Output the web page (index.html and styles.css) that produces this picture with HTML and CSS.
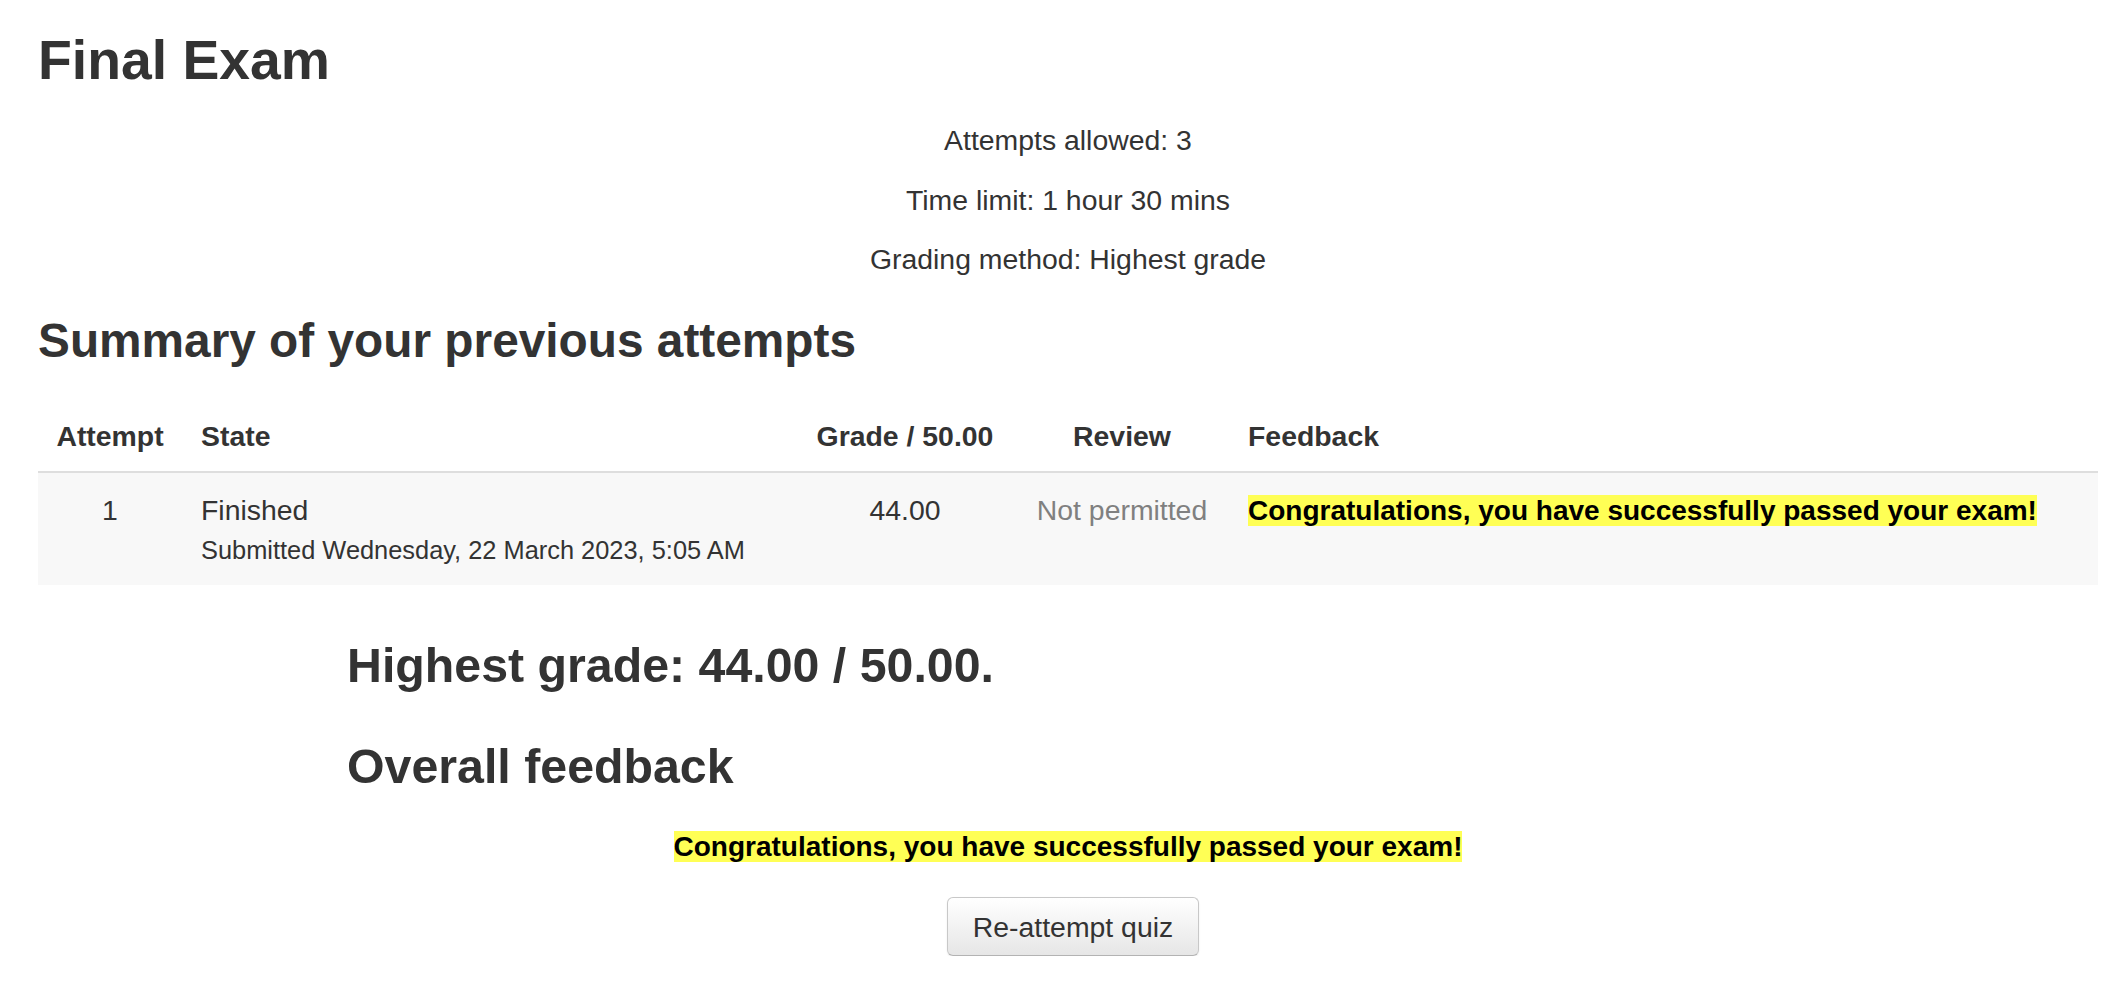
FILE: index.html
```html
<!DOCTYPE html>
<html lang="en">
<head>
<meta charset="utf-8">
<title>Final Exam</title>
<link rel="stylesheet" href="styles.css">
</head>
<body>
<div class="page">
  <h2 class="title">Final Exam</h2>
  <div class="quizinfo">
    <p>Attempts allowed: 3</p>
    <p>Time limit: 1 hour 30 mins</p>
    <p>Grading method: Highest grade</p>
  </div>
  <h3 class="summary">Summary of your previous attempts</h3>
  <table class="attempts">
    <thead>
      <tr>
        <th class="c-attempt">Attempt</th>
        <th class="c-state">State</th>
        <th class="c-grade">Grade / 50.00</th>
        <th class="c-review">Review</th>
        <th class="c-feedback">Feedback</th>
      </tr>
    </thead>
    <tbody>
      <tr>
        <td class="c-attempt">1</td>
        <td class="c-state">Finished<span class="statedetails">Submitted Wednesday, 22 March 2023, 5:05 AM</span></td>
        <td class="c-grade">44.00</td>
        <td class="c-review"><span class="muted">Not permitted</span></td>
        <td class="c-feedback"><span class="hl">Congratulations, you have successfully passed your exam!</span></td>
      </tr>
    </tbody>
  </table>
  <div class="result">
    <h3 class="grade">Highest grade: 44.00 / 50.00.</h3>
    <h3 class="overall-title">Overall feedback</h3>
  </div>
  <div class="overall"><span class="hl">Congratulations, you have successfully passed your exam!</span></div>
  <div class="buttons"><button class="btn" type="button">Re-attempt quiz</button></div>
</div>
</body>
</html>
```

FILE: styles.css
```css
html, body {
  margin: 0;
  padding: 0;
  background: #fff;
}
body {
  font-family: "Liberation Sans", Arial, Helvetica, sans-serif;
  font-size: 28.4px;
  line-height: 1.5;
  color: #333;
}
.page {
  width: 2060px;
  margin-left: 38px;
}
h2, h3 {
  font-weight: bold;
  line-height: 1.2;
  margin: 0;
  color: #333;
}
.title {
  font-size: 55.3px;
  margin-top: 27px;
}
.quizinfo {
  text-align: center;
  margin-top: 25.7px;
}
.quizinfo p {
  margin: 0 0 17px;
}
.summary {
  font-size: 47.8px;
  margin-top: 31.6px;
}
.attempts {
  width: 100%;
  table-layout: fixed;
  border-collapse: collapse;
  margin-top: 26.4px;
}
.attempts th,
.attempts td {
  box-sizing: border-box;
}
.attempts th {
  font-weight: bold;
  vertical-align: bottom;
  padding: 19px 19px 13.5px;
  border-bottom: 2px solid #dedede;
}
.attempts td {
  vertical-align: top;
  padding: 15.5px 19px 15.9px;
  background: #f8f8f8;
}
.c-attempt { width: 144px; text-align: center; }
.c-state { width: 613px; text-align: left; }
.c-grade { width: 220px; text-align: center; }
.c-review { width: 214px; text-align: center; }
.c-feedback { text-align: left; }
.attempts th.c-attempt { padding-left: 0; padding-right: 0; }
.statedetails {
  display: block;
  font-size: 25.4px;
  line-height: 1.5;
}
.muted { color: #808080; }
.hl {
  background: #ffff55;
  color: #000;
  font-weight: bold;
  font-size: 28px;
}
.result {
  margin-left: 309px;
  margin-top: 51.4px;
}
.grade { font-size: 48.3px; }
.overall-title { font-size: 48.3px; margin-top: 43px; }
.overall {
  text-align: center;
  margin-top: 29.6px;
}
.buttons {
  display: flex;
  justify-content: center;
  margin-top: 29px;
  padding-left: 10px;
}
.btn {
  font-family: "Liberation Sans", Arial, Helvetica, sans-serif;
  font-size: 28.4px;
  line-height: 42px;
  color: #333;
  padding: 7.5px 25px;
  border: 1px solid #c8c8c8;
  border-bottom-color: #b3b3b3;
  border-radius: 6px;
  background: linear-gradient(#ffffff, #e6e6e6);
  box-shadow: 0 1px 2px rgba(0,0,0,0.08);
}
```
